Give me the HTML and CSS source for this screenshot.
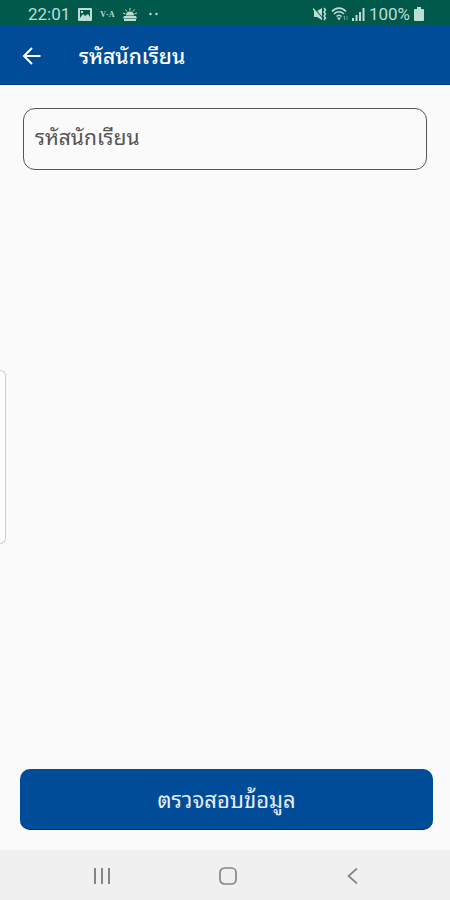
FILE: index.html
```
<!DOCTYPE html>
<html lang="th">
<head>
    <meta charset="UTF-8">
    <meta name="viewport" content="width=device-width, initial-scale=1.0">
    <title>รหัสนักเรียน</title>
    <link rel="stylesheet" href="styles.css">
</head>
<body>
    <!-- Status bar -->
    <div class="status-bar">
        <div class="status-group">
            <span class="clock">22:01</span>
            <svg class="status-icon" width="14" height="13" viewBox="0 0 14 13">
                <path fill-rule="evenodd" d="M1 0h12a1 1 0 0 1 1 1v11a1 1 0 0 1-1 1H1a1 1 0 0 1-1-1V1a1 1 0 0 1 1-1zM2 2v8l3-4 2 2 3-2 2 3V2zM3 3h2v2H3z"/>
            </svg>
            <span class="carrier">V·A</span>
            <svg class="status-icon" width="14" height="13" viewBox="0 0 14 13">
                <path d="M3 7.500a4 4 0 0 1 8 0zM1 8h12l1 2.500H0zM1 11h12v2H1z"/>
                <path d="M7 0v2.500M2.500 1.500l1.500 2M11.500 1.500l-1.500 2M0 5l2.500 1M14 5l-2.500 1" fill="none" stroke="currentColor"/>
            </svg>
            <svg class="status-icon dots" width="10" height="4" viewBox="0 0 10 4">
                <circle cx="1.500" cy="2" r="1.200"/>
                <circle cx="7.500" cy="2" r="1.200"/>
            </svg>
        </div>
        <div class="status-group status-right">
            <svg class="status-icon" width="14" height="14" viewBox="0 0 14 14">
                <path d="M1 4h3l5-3v12L4 10H1z"/>
                <path d="M1 1l9 11" fill="none" stroke="#00594b" stroke-width="1.200"/>
                <path d="M0 1.500l9 10.500" fill="none" stroke="currentColor" stroke-width="1.200"/>
                <path d="M11 1l1.500 2-1.500 2 1.500 2-1.500 2 1.500 2-1.500 2" fill="none" stroke="currentColor" stroke-width="1.500"/>
            </svg>
            <svg class="status-icon" width="17" height="14" viewBox="0 0 17 14">
                <path d="M1 4.500c4-4.500 10-4.500 14 0M3 7c3-3 7-3 10 0M5.500 9.500c1.500-1.500 3.500-1.500 5 0" fill="none" stroke="currentColor" stroke-width="1.600"/>
                <path d="M6 10.500h4l-2 3z"/>
                <path d="M13.500 13V9M12 10.500L13.500 9M16 9v4" fill="none" stroke="currentColor" opacity="0.500"/>
            </svg>
            <svg class="status-icon" width="13" height="13" viewBox="0 0 13 13">
                <path d="M0 10h2v3H0zM3.500 7h2v6h-2zM7 4h2v9H7z"/>
                <path d="M10.500 0h2v13h-2z"/>
            </svg>
            <span class="battery-level">100%</span>
            <svg class="status-icon" width="10" height="14" viewBox="0 0 10 14">
                <path d="M3 0h4v2h2a1 1 0 0 1 1 1v10a1 1 0 0 1-1 1H1a1 1 0 0 1-1-1V3a1 1 0 0 1 1-1h2z"/>
            </svg>
        </div>
    </div>

    <!-- App bar -->
    <header class="app-bar">
        <button type="button" class="icon-button" aria-label="ย้อนกลับ">
            <svg width="20" height="18" viewBox="0 0 20 18" fill="none" stroke="currentColor" stroke-width="2">
                <path d="M18.500 9H2.500M10 1L2 9l8 8"/>
            </svg>
        </button>
        <h1>รหัสนักเรียน</h1>
    </header>

    <main>
        <form class="student-form" id="student-form">
            <input type="text" id="student-id" placeholder="รหัสนักเรียน" aria-label="รหัสนักเรียน">
            <button type="submit" class="submit-button">ตรวจสอบข้อมูล</button>
        </form>
    </main>

    <!-- Edge panel handle -->
    <div class="edge-handle"></div>

    <!-- System navigation -->
    <nav class="nav-bar">
        <button type="button" class="nav-button" aria-label="Recents">
            <svg width="18" height="18" viewBox="0 0 18 18" fill="none" stroke="currentColor" stroke-width="2">
                <path d="M2 1v16M9 1v16M16 1v16"/>
            </svg>
        </button>
        <button type="button" class="nav-button" aria-label="Home">
            <svg width="18" height="18" viewBox="0 0 18 18" fill="none" stroke="currentColor" stroke-width="1.700">
                <rect x="1" y="1" width="16" height="16" rx="4.500"/>
            </svg>
        </button>
        <button type="button" class="nav-button" aria-label="Back">
            <svg width="18" height="18" viewBox="0 0 18 18" fill="none" stroke="currentColor" stroke-width="1.700">
                <path d="M13 1.500L4.500 9l8.500 7.500"/>
            </svg>
        </button>
    </nav>
</body>
</html>
```
FILE: styles.css
```
* {
    box-sizing: border-box;
}

body {
    margin: 0;
    min-height: 100vh;
    display: flex;
    flex-direction: column;
    background-color: #fafafa;
    font-family: Roboto, "Noto Sans Thai Looped", "Droid Sans Thai", Loma, Garuda, Waree, "Noto Sans", sans-serif;
}

button {
    border: none;
    background: none;
    padding: 0;
    font-family: inherit;
    cursor: pointer;
}

svg {
    display: block;
}

.status-bar {
    height: 26px;
    padding: 2px 26px 0 28px;
    display: flex;
    align-items: center;
    justify-content: space-between;
    background-color: #00594b;
    color: #bcdcd4;
    font-size: 17px;
}

.status-group {
    display: flex;
    align-items: center;
    gap: 8px;
}

.status-right {
    gap: 4px;
}

.status-icon {
    fill: currentColor;
}

.carrier {
    font-family: "Liberation Serif", serif;
    font-size: 8px;
    font-weight: bold;
}

.dots {
    margin-left: 4px;
}

.app-bar {
    height: 59px;
    padding: 2px 22px 0;
    display: flex;
    align-items: center;
    gap: 37px;
    background-color: #004c99;
    border-bottom: 1px solid #003894;
    color: #fff;
}

.icon-button {
    color: inherit;
}

h1 {
    margin: 0;
    padding-top: 2px;
    font-size: 21px;
    line-height: 30px;
    font-weight: 500;
}

main {
    flex: 1;
    display: flex;
    padding: 23px 17px 20px 20px;
}

.student-form {
    flex: 1;
    display: flex;
    flex-direction: column;
    justify-content: space-between;
}

input {
    height: 62px;
    margin: 0 6px 0 3px;
    padding: 0 11px 2px;
    border: 1px solid #555;
    border-radius: 12px;
    background-color: #fafafa;
    font-family: inherit;
    font-size: 21px;
    color: #333;
}

input::placeholder {
    color: #555;
    opacity: 1;
}

.submit-button {
    height: 61px;
    padding-bottom: 3px;
    border-radius: 10px;
    border-bottom: 1px solid #002a8c;
    background-color: #004c99;
    color: #e6edfa;
    font-size: 22px;
}

/* Sits over the left edge of the screen */
.edge-handle {
    position: absolute;
    left: 0;
    top: 370px;
    width: 6px;
    height: 174px;
    border: 1px solid #ccc;
    border-left: none;
    border-radius: 0 6px 6px 0;
    background-color: #fdfdfd;
}

.nav-bar {
    height: 50px;
    padding: 2px 34px 0 39px;
    display: flex;
    align-items: center;
    background-color: #f0f0f0;
    color: #858585;
}

.nav-button {
    flex: 1;
    height: 48px;
    display: flex;
    align-items: center;
    justify-content: center;
    color: inherit;
}
```
